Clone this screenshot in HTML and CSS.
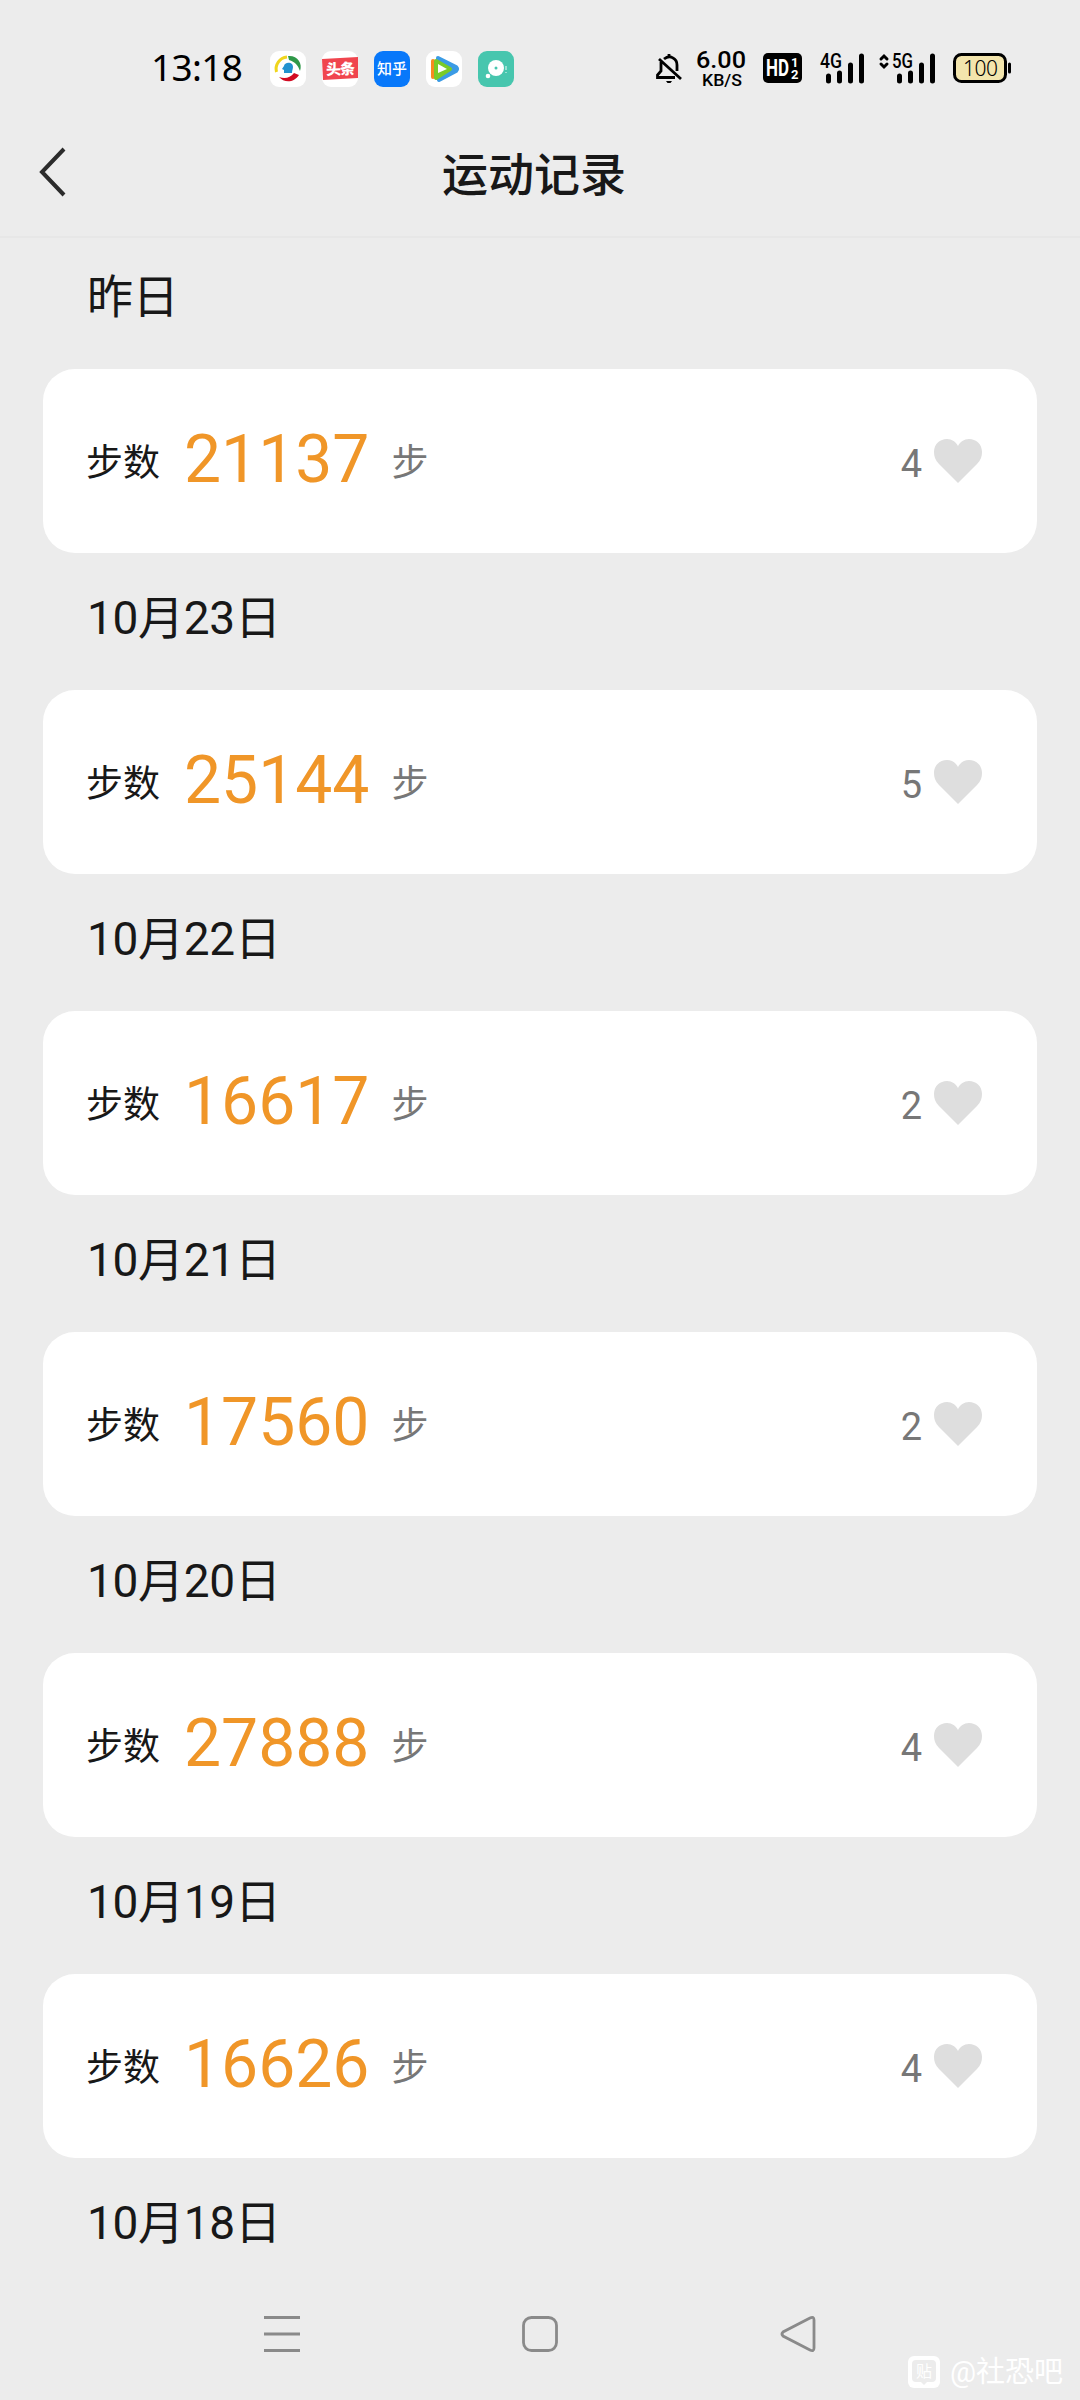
FILE: index.html
```html
<!DOCTYPE html>
<html lang="zh-CN">
<head>
  <meta charset="UTF-8">
  <meta name="viewport" content="width=device-width, initial-scale=1.0">
  <title>运动记录</title>
  <link rel="stylesheet" href="styles.css">
</head>
<body>
  <div class="status-bar">
    <svg class="clock" width="90" height="36"><text x="-2" y="30" textLength="92">13:18</text></svg>
    <div class="apps">
      <svg class="app" viewBox="0 0 36 36">
        <rect width="36" height="36" rx="9" fill="#fff"/>
        <path d="M6.500 21A12 12 0 0 1 17 6" fill="none" stroke="#f0d51d" stroke-width="3"/>
        <path d="M18 5C27 4 33 12 30 20C28 14 25 11 19 9Z" fill="#2f9848"/>
        <path d="M9 26C15 28 20 27 24 22L29 24C24 32 14 32 9 26Z" fill="#d20b22"/>
        <path d="M14 22V19L12 18L14 15C14 11 23 10 23 16C23 18 22 19 22 22Z" fill="#2292cf"/>
      </svg>
      <svg class="app" viewBox="0 0 36 36">
        <rect width="36" height="36" rx="9" fill="#fff"/>
        <path d="M0 8L36 6V27L1 29Z" fill="#f0454e"/>
        <text x="4" y="23.500" textLength="29" font-size="15" font-weight="900" fill="#fff" transform="rotate(-2 18 18)">头条</text>
      </svg>
      <svg class="app" viewBox="0 0 36 36">
        <rect width="36" height="36" rx="9" fill="#0878fa"/>
        <text x="3" y="23" textLength="30" font-size="15" font-weight="500" fill="#fff">知乎</text>
      </svg>
      <svg class="app" viewBox="0 0 36 36">
        <rect width="36" height="36" rx="9" fill="#fff"/>
        <path d="M12 7L30 16Q32 18 30 20L13 29Z" fill="#3b9be5" stroke="#3b9be5" stroke-width="4" stroke-linejoin="round"/>
        <path d="M7 10V26" stroke="#f88a20" stroke-width="4" stroke-linecap="round"/>
        <path d="M10 10L24 18L10 27Z" fill="#7acb28" stroke="#7acb28" stroke-width="4" stroke-linejoin="round"/>
        <path d="M12 13L21 18L12 22Z" fill="#fff"/>
      </svg>
      <svg class="app" viewBox="0 0 36 36">
        <rect width="36" height="36" rx="9" fill="#47c6ae"/>
        <circle cx="18" cy="17" r="8" fill="#fff"/>
        <circle cx="18" cy="17" r="1.500" fill="#47c6ae"/>
        <circle cx="10" cy="25" r="2.300" fill="#fff"/>
        <path d="M28 15V19M28 21V22" stroke="#b7eae1" stroke-width="1.500"/>
      </svg>
    </div>
    <svg class="bell" width="26" height="32" viewBox="0 0 26 32" fill="none" stroke="#000" stroke-width="2.800">
      <path d="M8 6Q13 2 17 5Q21 7 21 12V18M5 9V18L1.500 22V24.500H19M3 6L25 26M13 1V5"/>
      <path d="M10 28H16L14.500 30H11.500Z" fill="#000" stroke="none"/>
    </svg>
    <svg class="speed" width="52" height="38">
      <text x="0" y="17" textLength="50" lengthAdjust="spacingAndGlyphs" font-size="23">6.00</text>
      <text x="6" y="35" textLength="40" lengthAdjust="spacingAndGlyphs" font-size="17">KB/S</text>
    </svg>
    <svg class="hd" width="39" height="30">
      <rect width="39" height="30" rx="5"/>
      <text x="3" y="23" textLength="23" font-size="23" lengthAdjust="spacingAndGlyphs">HD</text>
      <text x="28" y="14" font-size="13">1</text>
      <text x="28" y="25.500" font-size="13">2</text>
    </svg>
    <svg class="signal" width="46" height="32">
      <text x="0" y="15" textLength="22" lengthAdjust="spacingAndGlyphs">4G</text>
      <path d="M8.500 23V28M19.500 20V28M30.500 12V28M41.500 3V28"/>
    </svg>
    <svg class="signal signal-5g" width="58" height="32">
      <text x="13" y="15" textLength="21" lengthAdjust="spacingAndGlyphs">5G</text>
      <path class="arrows" d="M2 6L5 3L8 6M2 11L5 14L8 11"/>
      <path d="M20.500 23V28M31.500 20V28M42.500 12V28M53.500 3V28"/>
    </svg>
    <svg class="battery" width="59" height="30">
      <rect x="1.500" y="1.500" width="51" height="27" rx="7" fill="#f3e5ad" stroke="#000" stroke-width="3"/>
      <path d="M56.500 11V19" stroke="#000" stroke-width="3" stroke-linecap="round"/>
      <text x="10" y="22.500" textLength="35">100</text>
    </svg>
  </div>

  <header>
    <svg class="back" width="28" height="50" viewBox="0 0 28 50"><path d="M25 2L3 25L25 48"/></svg>
    <h1>运动记录</h1>
  </header>

  <main id="records"></main>

  <nav class="nav-bar">
    <svg width="36" height="36"><path d="M0 1.500H36M0 18H36M0 34.500H36"/></svg>
    <svg width="36" height="36"><rect x="1.500" y="1.500" width="33" height="33" rx="8"/></svg>
    <svg width="36" height="36"><path d="M30 2L3 16Q1 18 3 20L30 34Q34 36 34 32V4Q34 0 30 2Z"/></svg>
  </nav>

  <div class="watermark">
    <svg width="32" height="32" viewBox="0 0 32 32">
      <rect width="32" height="32" rx="6" fill="#fff"/>
      <path d="M8 4H24Q28 4 28 8V22Q28 26 24 26H19L16 29L13 26H8Q4 26 4 22V8Q4 4 8 4Z" fill="#ececec"/>
      <text x="8" y="21" font-size="16" fill="#fff">贴</text>
    </svg>
    <span>@社恐吧</span>
  </div>

  <script>
    const records = [
      { date: "昨日", steps: 21137, likes: 4 },
      { date: "10月23日", steps: 25144, likes: 5 },
      { date: "10月22日", steps: 16617, likes: 2 },
      { date: "10月21日", steps: 17560, likes: 2 },
      { date: "10月20日", steps: 27888, likes: 4 },
      { date: "10月19日", steps: 16626, likes: 4 },
      { date: "10月18日" }
    ];

    const container = document.getElementById("records");
    records.forEach((r) => {
      const section = document.createElement("section");
      section.innerHTML = `<h2 class="date">${r.date}</h2>`;
      if (r.steps) {
        section.innerHTML += `
          <div class="card">
            <span class="label">步数</span>
            <span class="steps">${r.steps}</span>
            <span class="unit">步</span>
            <span class="likes">${r.likes}</span>
            <svg class="heart" width="48" height="44" viewBox="0 0 48 44">
              <path d="M24 44L5 25C1 21 0 17 0 13C0 5 6 0 13 0C18 0 22 3 24 7C26 3 30 0 35 0C42 0 48 5 48 13C48 17 47 21 43 25Z"/>
            </svg>
          </div>`;
      }
      container.appendChild(section);
    });
  </script>
</body>
</html>
```
FILE: styles.css
```css
body {
  width: 1080px;
  height: 2400px;
  margin: 0;
  overflow: hidden;
  position: relative;
  display: flex;
  flex-direction: column;
  background-color: #ececec;
  color: #181818;
  font-family: Roboto, "Noto Sans CJK SC", sans-serif;
}
svg {
  display: block;
  flex: none;
  overflow: visible;
}
.status-bar {
  display: flex;
  align-items: flex-start;
  height: 88px;
  padding: 51px 0 0 153px;
  box-sizing: border-box;
  color: #000;
}
.clock {
  font: 37px "Noto Sans", sans-serif;
}
.apps {
  display: flex;
  gap: 16px;
  margin-left: 27px;
}
.app {
  width: 36px;
  height: 36px;
}
.bell {
  margin: 2px 0 0 142px;
}
.speed {
  margin-left: 14px;
  font-weight: 500;
}
.hd {
  margin: 2px 0 0 15px;
}
.hd text {
  fill: #fff;
  font-weight: 700;
}
.signal {
  margin: 2px 0 0 18px;
  font-size: 20px;
  font-weight: 500;
}
.signal path {
  fill: none;
  stroke: #000;
  stroke-width: 5px;
  stroke-linecap: round;
}
.signal-5g {
  margin-left: 13px;
}
.signal .arrows {
  stroke-width: 3px;
}
.battery {
  margin: 2px 0 0 16px;
  font: 300 21px "Noto Sans", sans-serif;
}
header {
  display: flex;
  align-items: center;
  height: 150px;
  padding: 20px 39px 0;
  box-sizing: border-box;
  border-bottom: 2px solid #e7e7e7;
}
.back path {
  fill: none;
  stroke: #2b2b2b;
  stroke-width: 4px;
}
h1 {
  flex: 1;
  margin: 0 40px 2px 0;
  text-align: center;
  font-size: 46px;
  font-weight: 500;
}
main {
  padding: 0 43px;
}
.date {
  margin: 0;
  padding: 35px 43px 42px 44px;
  line-height: 60px;
  font-size: 46px;
  font-weight: 400;
  letter-spacing: -0.3px;
}
section:first-child .date {
  padding-top: 29px;
}
.card {
  display: flex;
  align-items: flex-start;
  height: 184px;
  padding: 52px 55px 0 43px;
  box-sizing: border-box;
  border-radius: 32px;
  background-color: #fff;
  line-height: 78px;
}
.label {
  margin-top: 4px;
  font-size: 37px;
}
.steps {
  margin-left: 24px;
  color: #f09628;
  font-size: 66px;
}
.unit {
  margin: 4px 0 0 22px;
  color: #777;
  font-size: 37px;
}
.likes {
  margin: 4px 0 0 auto;
  color: #777;
  font-size: 38px;
}
.heart {
  margin: 18px 0 0 12px;
  fill: #dedede;
}
.nav-bar {
  position: absolute;
  top: 2316px;
  left: 264px;
  width: 552px;
  display: flex;
  justify-content: space-between;
}
.nav-bar svg {
  fill: none;
  stroke: #8a8a8a;
  stroke-width: 2.8px;
}
.watermark {
  position: absolute;
  right: 17px;
  bottom: 10px;
  display: flex;
  align-items: center;
  gap: 10px;
  color: #fff;
  font-size: 29px;
  line-height: 36px;
}
```
